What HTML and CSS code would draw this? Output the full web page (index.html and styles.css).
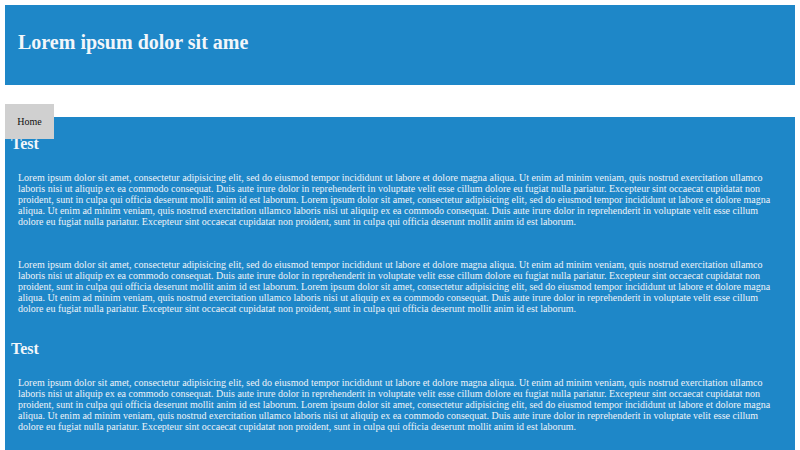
FILE: index.html
```html
<!DOCTYPE html>
<html>
<head>
<meta charset="utf-8">
<link rel="stylesheet" href="styles.css">
</head>
<body>
<header class="top">
  <h1 class="title">Lorem ipsum dolor sit ame</h1>
</header>
<nav class="nav">
  <a class="nav-item">Home</a>
</nav>
<main class="content">
  <h2 class="heading">Test</h2>
  <p class="text">Lorem ipsum dolor sit amet, consectetur adipisicing elit, sed do eiusmod tempor incididunt ut labore et dolore magna aliqua. Ut enim ad minim veniam, quis nostrud exercitation ullamco laboris nisi ut aliquip ex ea commodo consequat. Duis aute irure dolor in reprehenderit in voluptate velit esse cillum dolore eu fugiat nulla pariatur. Excepteur sint occaecat cupidatat non proident, sunt in culpa qui officia deserunt mollit anim id est laborum. Lorem ipsum dolor sit amet, consectetur adipisicing elit, sed do eiusmod tempor incididunt ut labore et dolore magna aliqua. Ut enim ad minim veniam, quis nostrud exercitation ullamco laboris nisi ut aliquip ex ea commodo consequat. Duis aute irure dolor in reprehenderit in voluptate velit esse cillum dolore eu fugiat nulla pariatur. Excepteur sint occaecat cupidatat non proident, sunt in culpa qui officia deserunt mollit anim id est laborum.</p>
  <p class="text text-gap">Lorem ipsum dolor sit amet, consectetur adipisicing elit, sed do eiusmod tempor incididunt ut labore et dolore magna aliqua. Ut enim ad minim veniam, quis nostrud exercitation ullamco laboris nisi ut aliquip ex ea commodo consequat. Duis aute irure dolor in reprehenderit in voluptate velit esse cillum dolore eu fugiat nulla pariatur. Excepteur sint occaecat cupidatat non proident, sunt in culpa qui officia deserunt mollit anim id est laborum. Lorem ipsum dolor sit amet, consectetur adipisicing elit, sed do eiusmod tempor incididunt ut labore et dolore magna aliqua. Ut enim ad minim veniam, quis nostrud exercitation ullamco laboris nisi ut aliquip ex ea commodo consequat. Duis aute irure dolor in reprehenderit in voluptate velit esse cillum dolore eu fugiat nulla pariatur. Excepteur sint occaecat cupidatat non proident, sunt in culpa qui officia deserunt mollit anim id est laborum.</p>
  <h2 class="heading heading-2">Test</h2>
  <p class="text">Lorem ipsum dolor sit amet, consectetur adipisicing elit, sed do eiusmod tempor incididunt ut labore et dolore magna aliqua. Ut enim ad minim veniam, quis nostrud exercitation ullamco laboris nisi ut aliquip ex ea commodo consequat. Duis aute irure dolor in reprehenderit in voluptate velit esse cillum dolore eu fugiat nulla pariatur. Excepteur sint occaecat cupidatat non proident, sunt in culpa qui officia deserunt mollit anim id est laborum. Lorem ipsum dolor sit amet, consectetur adipisicing elit, sed do eiusmod tempor incididunt ut labore et dolore magna aliqua. Ut enim ad minim veniam, quis nostrud exercitation ullamco laboris nisi ut aliquip ex ea commodo consequat. Duis aute irure dolor in reprehenderit in voluptate velit esse cillum dolore eu fugiat nulla pariatur. Excepteur sint occaecat cupidatat non proident, sunt in culpa qui officia deserunt mollit anim id est laborum.</p>
</main>
</body>
</html>
```

FILE: styles.css
```css
html, body {
  margin: 0;
  padding: 0;
}
body {
  padding: 5px;
  font-family: "Liberation Serif", "Times New Roman", serif;
  background: #ffffff;
}
.top {
  background: #1e87c8;
  height: 80px;
  display: flow-root;
  padding-left: 13px;
}
.title {
  margin: 26px 0 0 0;
  font-size: 20px;
  line-height: 23px;
  font-weight: bold;
  color: #f2f6fa;
}
.nav {
  margin-top: 19px;
  height: 13px;
}
.nav-item {
  position: relative;
  z-index: 1;
  display: inline-flex;
  align-items: center;
  justify-content: center;
  width: 49px;
  height: 35px;
  background: #d0d0d0;
  color: #111;
  font-size: 10px;
}
.content {
  background: #1e87c8;
  display: flow-root;
  padding: 0 13px 20px 0;
  min-height: 340px;
}
.heading {
  margin: 18px 0 0 6px;
  font-size: 16px;
  font-weight: bold;
  color: #f2f6fa;
}
.heading-2 {
  margin-top: 26px;
}
.text {
  margin: 19px 0 0 13px;
  font-size: 10px;
  color: #eef3f8;
}
.text-gap {
  margin-top: 32px;
}
```
